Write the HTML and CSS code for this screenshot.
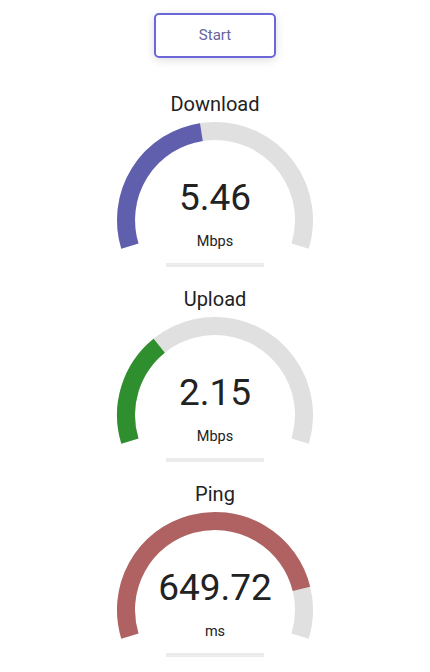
FILE: index.html
```html
<!DOCTYPE html>
<html lang="en">
<head>
  <meta charset="UTF-8" />
  <meta name="viewport" content="width=device-width, initial-scale=1.0"/>
  <title>Speed Test</title>
  <link rel="stylesheet" href="styles.css">
</head>
<body>
  <div class="app">
    <button class="start-btn">Start</button>

    <div class="gauge-card">
      <h2>Download</h2>
      <svg class="gauge" width="200" height="140" viewBox="0 0 200 140">
        <path class="track" d="M14.89 129.02 A89 89 0 1 1 185.11 129.02" />
        <path class="fill download" d="M14.89 129.02 A89 89 0 0 1 86.38 15.05" />
        <text class="value" x="100" y="93">5.46</text>
        <text class="unit" x="100" y="129">Mbps</text>
      </svg>
      <div class="bar"></div>
    </div>

    <div class="gauge-card">
      <h2>Upload</h2>
      <svg class="gauge" width="200" height="140" viewBox="0 0 200 140">
        <path class="track" d="M14.89 129.02 A89 89 0 1 1 185.11 129.02" />
        <path class="fill upload" d="M14.89 129.02 A89 89 0 0 1 44.23 33.64" />
        <text class="value" x="100" y="93">2.15</text>
        <text class="unit" x="100" y="129">Mbps</text>
      </svg>
      <div class="bar"></div>
    </div>

    <div class="gauge-card">
      <h2>Ping</h2>
      <svg class="gauge" width="200" height="140" viewBox="0 0 200 140">
        <path class="track" d="M14.89 129.02 A89 89 0 1 1 185.11 129.02" />
        <path class="fill ping" d="M14.89 129.02 A89 89 0 1 1 186.43 81.77" />
        <text class="value" x="100" y="93">649.72</text>
        <text class="unit" x="100" y="129">ms</text>
      </svg>
      <div class="bar"></div>
    </div>
  </div>
</body>
</html>
```

FILE: styles.css
```css
body {
  font-family: Roboto, 'Noto Sans', sans-serif;
  background-color: #fff;
  color: #222;
  margin: 0;
  overflow: hidden;
}

.app {
  display: flex;
  flex-direction: column;
  align-items: center;
  gap: 20px;
  padding-top: 13px;
}

.start-btn {
  width: 122px;
  height: 45px;
  margin-bottom: 14px;
  padding: 0 0 2px;
  background-color: #fff;
  border: 2px solid #6b67d9;
  border-radius: 5px;
  box-shadow: 0 2px 10px rgba(0,0,0,0.14);
  font-family: Roboto, sans-serif;
  font-size: 15px;
  color: #65649e;
  cursor: pointer;
}

.gauge-card {
  display: flex;
  flex-direction: column;
  align-items: center;
}

.gauge-card h2 {
  margin: 0;
  font-size: 20px;
  font-weight: 400;
  line-height: 24px;
  color: #222;
}

.gauge {
  display: block;
  margin-top: 1px;
}

.track,
.fill {
  fill: none;
  stroke-width: 18;
  stroke-linecap: butt;
}

.track {
  stroke: #e0e0e0;
}

.fill.download {
  stroke: #5f5fae;
}

.fill.upload {
  stroke: #2f8f2f;
}

.fill.ping {
  stroke: #b06262;
}

.value {
  font-family: Roboto, sans-serif;
  font-size: 37px;
  fill: #222;
  text-anchor: middle;
}

.unit {
  font-family: Roboto, sans-serif;
  font-size: 14.5px;
  fill: #222;
  text-anchor: middle;
}

.bar {
  width: 98px;
  height: 4px;
  margin-top: 6px;
  background-color: #ebebeb;
}
```
